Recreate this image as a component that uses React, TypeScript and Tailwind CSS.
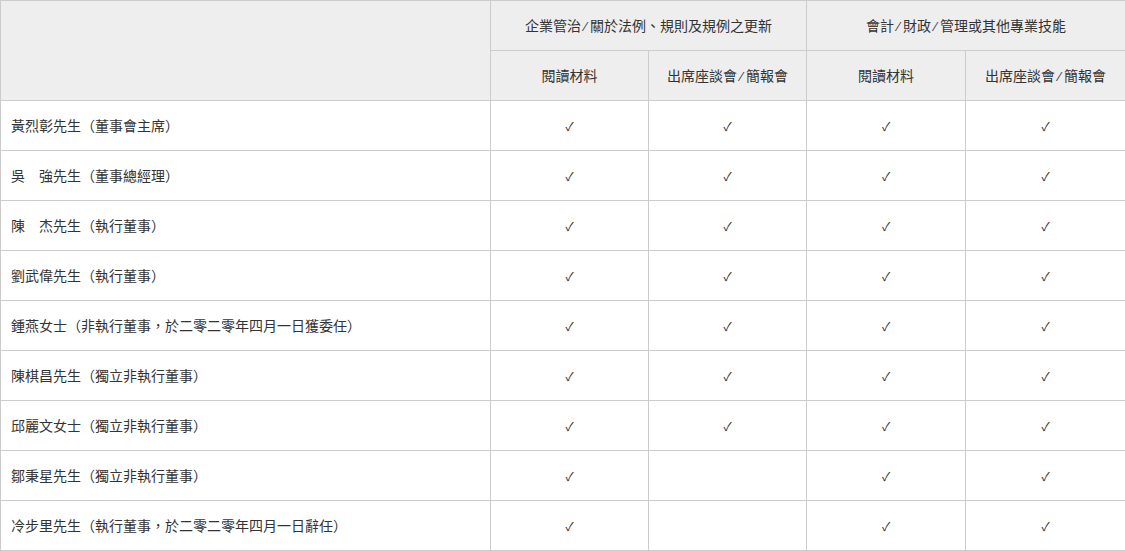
function Slash() {
  return (
    <span
      className="inline-block w-[9px] text-center text-[13px]"
      style={{ fontFamily: '"Liberation Sans", sans-serif' }}
    >
      ⁄
    </span>
  );
}

export default function App() {
  const rows = [
    { name: "黃烈彰先生（董事會主席）", checks: [true, true, true, true] },
    { name: "吳　強先生（董事總經理）", checks: [true, true, true, true] },
    { name: "陳　杰先生（執行董事）", checks: [true, true, true, true] },
    { name: "劉武偉先生（執行董事）", checks: [true, true, true, true] },
    { name: "鍾燕女士（非執行董事，於二零二零年四月一日獲委任）", checks: [true, true, true, true] },
    { name: "陳棋昌先生（獨立非執行董事）", checks: [true, true, true, true] },
    { name: "邱麗文女士（獨立非執行董事）", checks: [true, true, true, true] },
    { name: "鄒秉星先生（獨立非執行董事）", checks: [true, false, true, true] },
    { name: "冷步里先生（執行董事，於二零二零年四月一日辭任）", checks: [true, false, true, true] },
  ];

  const cell = "border border-[#cccccc] text-center";
  const head = "border border-[#cccccc] bg-[#eeeeee] text-center font-normal";

  return (
    <div
      className="w-[1125px] bg-white text-[14px] text-[#333333]"
      style={{ fontFamily: '"Noto Sans CJK TC", "Liberation Sans", sans-serif' }}
    >
      <table className="w-[1125px] table-fixed border-collapse">
        <colgroup>
          <col className="w-[490px]" />
          <col className="w-[158px]" />
          <col className="w-[158px]" />
          <col className="w-[159px]" />
          <col className="w-[160px]" />
        </colgroup>
        <thead>
          <tr className="h-[50px]">
            <th rowSpan={2} className="border border-[#cccccc] bg-[#eeeeee]" />
            <th colSpan={2} className={head}>
              企業管治<Slash />關於法例、規則及規例之更新
            </th>
            <th colSpan={2} className={head}>
              會計<Slash />財政<Slash />管理或其他專業技能
            </th>
          </tr>
          <tr className="h-[50px]">
            <th className={head}>閱讀材料</th>
            <th className={head}>
              出席座談會<Slash />簡報會
            </th>
            <th className={head}>閱讀材料</th>
            <th className={head}>
              出席座談會<Slash />簡報會
            </th>
          </tr>
        </thead>
        <tbody>
          {rows.map((row, i) => (
            <tr key={i} className="h-[50px]">
              <td className="border border-[#cccccc] pl-[10px] text-left">{row.name}</td>
              {row.checks.map((c, j) => (
                <td key={j} className={cell}>
                  {c ? <span className="text-[12px]">✓</span> : null}
                </td>
              ))}
            </tr>
          ))}
        </tbody>
      </table>
    </div>
  );
}
